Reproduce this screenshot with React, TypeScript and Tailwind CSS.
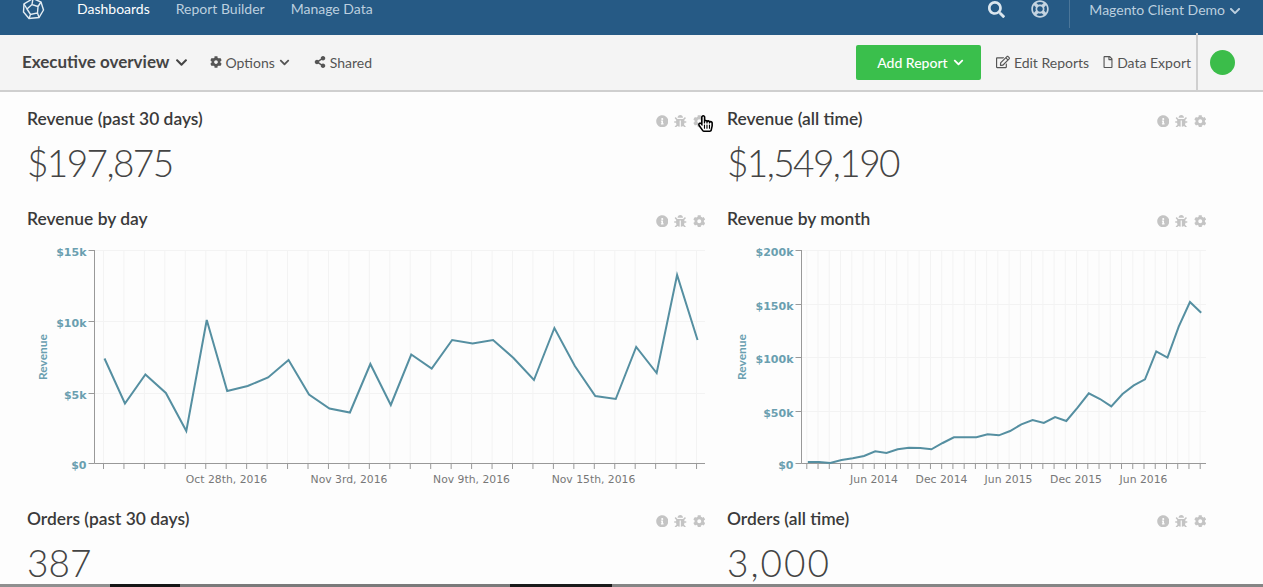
import { FaChevronDown, FaCog, FaShareAlt, FaRegEdit, FaRegFile, FaInfoCircle, FaBug, FaSearch, FaRegLifeRing, FaHandPointer, FaRegHandPointer } from 'react-icons/fa'

const dayXs = Array.from({ length: 30 }, (_, i) => 103.5 + i * 20.45)
const dayYs = [358.5, 403.5, 374.5, 393, 431, 320, 391, 386, 377.5, 360, 394.5, 408.5, 412.5, 364, 405, 354.5, 368.5, 340, 343.5, 340, 358, 380, 328, 366, 396, 399, 347, 373, 275, 340]

// traced from the chart, in zoomed-crop y
const monthYs = [771, 771, 774, 765, 760, 753, 739, 744, 733, 728, 729, 733, 714, 697, 697, 697, 688, 691, 678, 658, 645, 654, 636, 648, 608, 565, 582, 604, 567, 541, 523, 439, 458, 365, 291, 323].map((y) => 205 + y / 3)
const monthXs = monthYs.map((_, i) => 806.8 + i * 11.24)

const axisFont = { fontFamily: '"DejaVu Sans", sans-serif' }

type ChartProps = {
  left: number
  width: number
  axisX: number
  xs: number[]
  ys: number[]
  yLabels: { label: string; y: number }[]
  xLabels: { label: string; x: number }[]
  titleX: number
}

function Chart({ left, width, axisX, xs, ys, yLabels, xLabels, titleX }: ChartProps) {
  const right = xs[xs.length - 1] + 10
  return (
    <svg viewBox={`${left} 240 ${width} 250`} width={width} height={250} className="block" style={axisFont}>
      {xs.map((x) => (
        <g key={x}>
          <line x1={x} x2={x} y1={250} y2={463} stroke="#f3f3f3" />
          <line x1={x} x2={x} y1={463} y2={469} stroke="#999" />
        </g>
      ))}
      {yLabels.map(({ label, y }) => (
        <g key={label}>
          <line x1={axisX} x2={right} y1={y} y2={y} stroke="#f3f3f3" />
          <line x1={axisX - 6} x2={axisX} y1={y} y2={y} stroke="#999" />
          <text x={axisX - 8} y={y + 5.5} textAnchor="end" fontSize={11} fontWeight={700} fill="#6a9fb0">
            {label}
          </text>
        </g>
      ))}
      <line x1={axisX} x2={axisX} y1={250} y2={463.5} stroke="#999" />
      <line x1={axisX} x2={right} y1={463.5} y2={463.5} stroke="#999" />
      <text
        transform={`translate(${titleX} 357) rotate(-90)`}
        textAnchor="middle"
        fontSize={12}
        fontWeight={700}
        fill="#6a9fb0"
        style={{ fontFamily: 'Lato, sans-serif' }}
      >
        Revenue
      </text>
      {xLabels.map(({ label, x }) => (
        <text key={label} x={x} y={483} textAnchor="middle" fontSize={10.8} fill="#777">
          {label}
        </text>
      ))}
      <polyline
        points={xs.map((x, i) => `${x + 1},${ys[i]}`).join(' ')}
        fill="none"
        stroke="#558fa1"
        strokeWidth={2}
      />
    </svg>
  )
}

function WidgetHeader({ title }: { title: string }) {
  return (
    <div className="flex items-center justify-between h-[38px]">
      <h3 className="text-[17.4px] font-semibold text-[#3a3a3a]">{title}</h3>
      <div className="flex items-center gap-[6px] text-[12.5px] text-[#c4c4c4] mt-[4px]">
        <FaInfoCircle />
        <FaBug />
        <FaCog />
      </div>
    </div>
  )
}

function Stat({ title, value, spacing }: { title: string; value: string; spacing: string }) {
  return (
    <div>
      <WidgetHeader title={title} />
      <p className={`text-[37px] leading-[50px] font-light text-[#444] ${spacing}`}>{value}</p>
    </div>
  )
}

export default function App() {
  return (
    <div className="h-[587px] overflow-hidden flex flex-col bg-[#fdfdfd] relative font-['Lato',sans-serif]">
      {/* Top nav, page is scrolled so it sits high */}
      <header className="h-[35px] shrink-0 bg-[#265a85] flex items-start text-[14px] text-[#bccfdf]">
        <svg viewBox="0 0 24 24" className="w-[24px] h-[24px] ml-[21px] -mt-[3px]" fill="none" stroke="#e4edf3" strokeWidth={1.4}>
          <path d="M12 1.5 L20 5 L22.5 13 L18 20.5 L8 21.5 L2.5 15 L3 7 Z" />
          <path d="M6 12 L11 7.5 L17 9.5 L16.5 16 L9.5 17.5 Z M6 12 L3 7 M11 7.5 L12 1.5 M17 9.5 L20 5 M16.5 16 L18 20.5 M9.5 17.5 L8 21.5" />
        </svg>
        <nav className="flex gap-[26px] ml-[32px] mt-[-1px] leading-[20px]">
          <span className="text-white">Dashboards</span>
          <span>Report Builder</span>
          <span>Manage Data</span>
        </nav>
        <div className="ml-auto flex items-start">
          <FaSearch className="text-[17px] text-[#dbe6ee] mt-[1px]" />
          <FaRegLifeRing className="text-[18px] text-[#c4d4e1] ml-[26px]" />
          <div className="w-[1px] h-[28px] bg-[#4b7699] ml-[20px]" />
          <span className="ml-[19px] leading-[20px]">Magento Client Demo</span>
          <FaChevronDown className="text-[12px] ml-[4px] mt-[5px] mr-[22px]" />
        </div>
      </header>

      {/* Toolbar */}
      <div className="h-[57px] shrink-0 bg-[#f4f4f4] border-b-2 border-[#cfcfcf] flex items-center pb-[1px] text-[14px] text-[#555]">
        <span className="ml-[22px] text-[17px] font-bold text-[#444]">Executive overview</span>
        <FaChevronDown className="text-[13px] ml-[5px] text-[#444]" />
        <FaCog className="text-[12px] ml-[22px]" />
        <span className="ml-[4px]">Options</span>
        <FaChevronDown className="text-[11px] ml-[4px]" />
        <FaShareAlt className="text-[12px] ml-[24px]" />
        <span className="ml-[4px]">Shared</span>

        <button className="ml-auto w-[125px] h-[35px] bg-[#3abf4c] rounded-[2px] text-white text-[14px] font-medium flex items-center justify-center gap-[5px] pl-[4px]">
          Add Report
          <FaChevronDown className="text-[11px]" />
        </button>
        <FaRegEdit className="text-[14px] ml-[15px]" />
        <span className="ml-[4px]">Edit Reports</span>
        <FaRegFile className="text-[12px] ml-[13px]" />
        <span className="ml-[3px]">Data Export</span>
        <div className="w-[2px] h-[58px] bg-[#cfcfcf] ml-[5px] -mt-[1px]" />
        <div className="w-[25px] h-[25px] rounded-full bg-[#3bbd4a] ml-[12px] mr-[28px]" />
      </div>

      {/* Dashboard widgets */}
      <main className="flex-1 overflow-hidden grid grid-cols-[700px_479px] grid-rows-[100px_300px_100px] pl-[27px] pt-[8px]">
        <div className="w-[678px]">
          <Stat title="Revenue (past 30 days)" value="$197,875" spacing="tracking-[-1.6px]" />
        </div>
        <Stat title="Revenue (all time)" value="$1,549,190" spacing="tracking-[-1.6px]" />
        <div className="w-[678px]">
          <WidgetHeader title="Revenue by day" />
          <div className="mt-[2px]">
            <Chart
              left={27}
              width={678}
              axisX={94.5}
              titleX={47}
              xs={dayXs}
              ys={dayYs}
              yLabels={[
                { label: '$15k', y: 250.5 },
                { label: '$10k', y: 321.5 },
                { label: '$5k', y: 393.5 },
                { label: '$0', y: 463.5 },
              ]}
              xLabels={[
                { label: 'Oct 28th, 2016', x: 226.5 },
                { label: 'Nov 3rd, 2016', x: 349 },
                { label: 'Nov 9th, 2016', x: 471.5 },
                { label: 'Nov 15th, 2016', x: 593.5 },
              ]}
            />
          </div>
        </div>
        <div>
          <WidgetHeader title="Revenue by month" />
          <div className="mt-[2px]">
            <Chart
              left={727}
              width={479}
              axisX={801.5}
              titleX={746}
              xs={monthXs}
              ys={monthYs}
              yLabels={[
                { label: '$200k', y: 250.5 },
                { label: '$150k', y: 304.5 },
                { label: '$100k', y: 357.5 },
                { label: '$50k', y: 411.5 },
                { label: '$0', y: 463.5 },
              ]}
              xLabels={[
                { label: 'Jun 2014', x: 874 },
                { label: 'Dec 2014', x: 941.5 },
                { label: 'Jun 2015', x: 1008.5 },
                { label: 'Dec 2015', x: 1076 },
                { label: 'Jun 2016', x: 1143.5 },
              ]}
            />
          </div>
        </div>
        <div className="w-[678px]">
          <Stat title="Orders (past 30 days)" value="387" spacing="tracking-normal" />
        </div>
        <Stat title="Orders (all time)" value="3,000" spacing="tracking-[2px]" />
      </main>

      {/* Bit of the next frame showing through at the bottom */}
      <div className="absolute left-0 right-0 bottom-0 h-[3px] flex bg-[#858585]">
        <div className="w-[110px] bg-[#8f8f8f]" />
        <div className="w-[70px] bg-[#161616]" />
        <div className="w-[330px] bg-[#7a7a7a]" />
        <div className="w-[102px] bg-[#1a1a1a]" />
      </div>

      {/* Mouse pointer */}
      <div className="absolute left-[697px] top-[115px] w-[15px] h-[18px] text-[17px]">
        <FaHandPointer className="absolute text-white" />
        <FaRegHandPointer className="absolute text-black" />
      </div>
    </div>
  )
}
